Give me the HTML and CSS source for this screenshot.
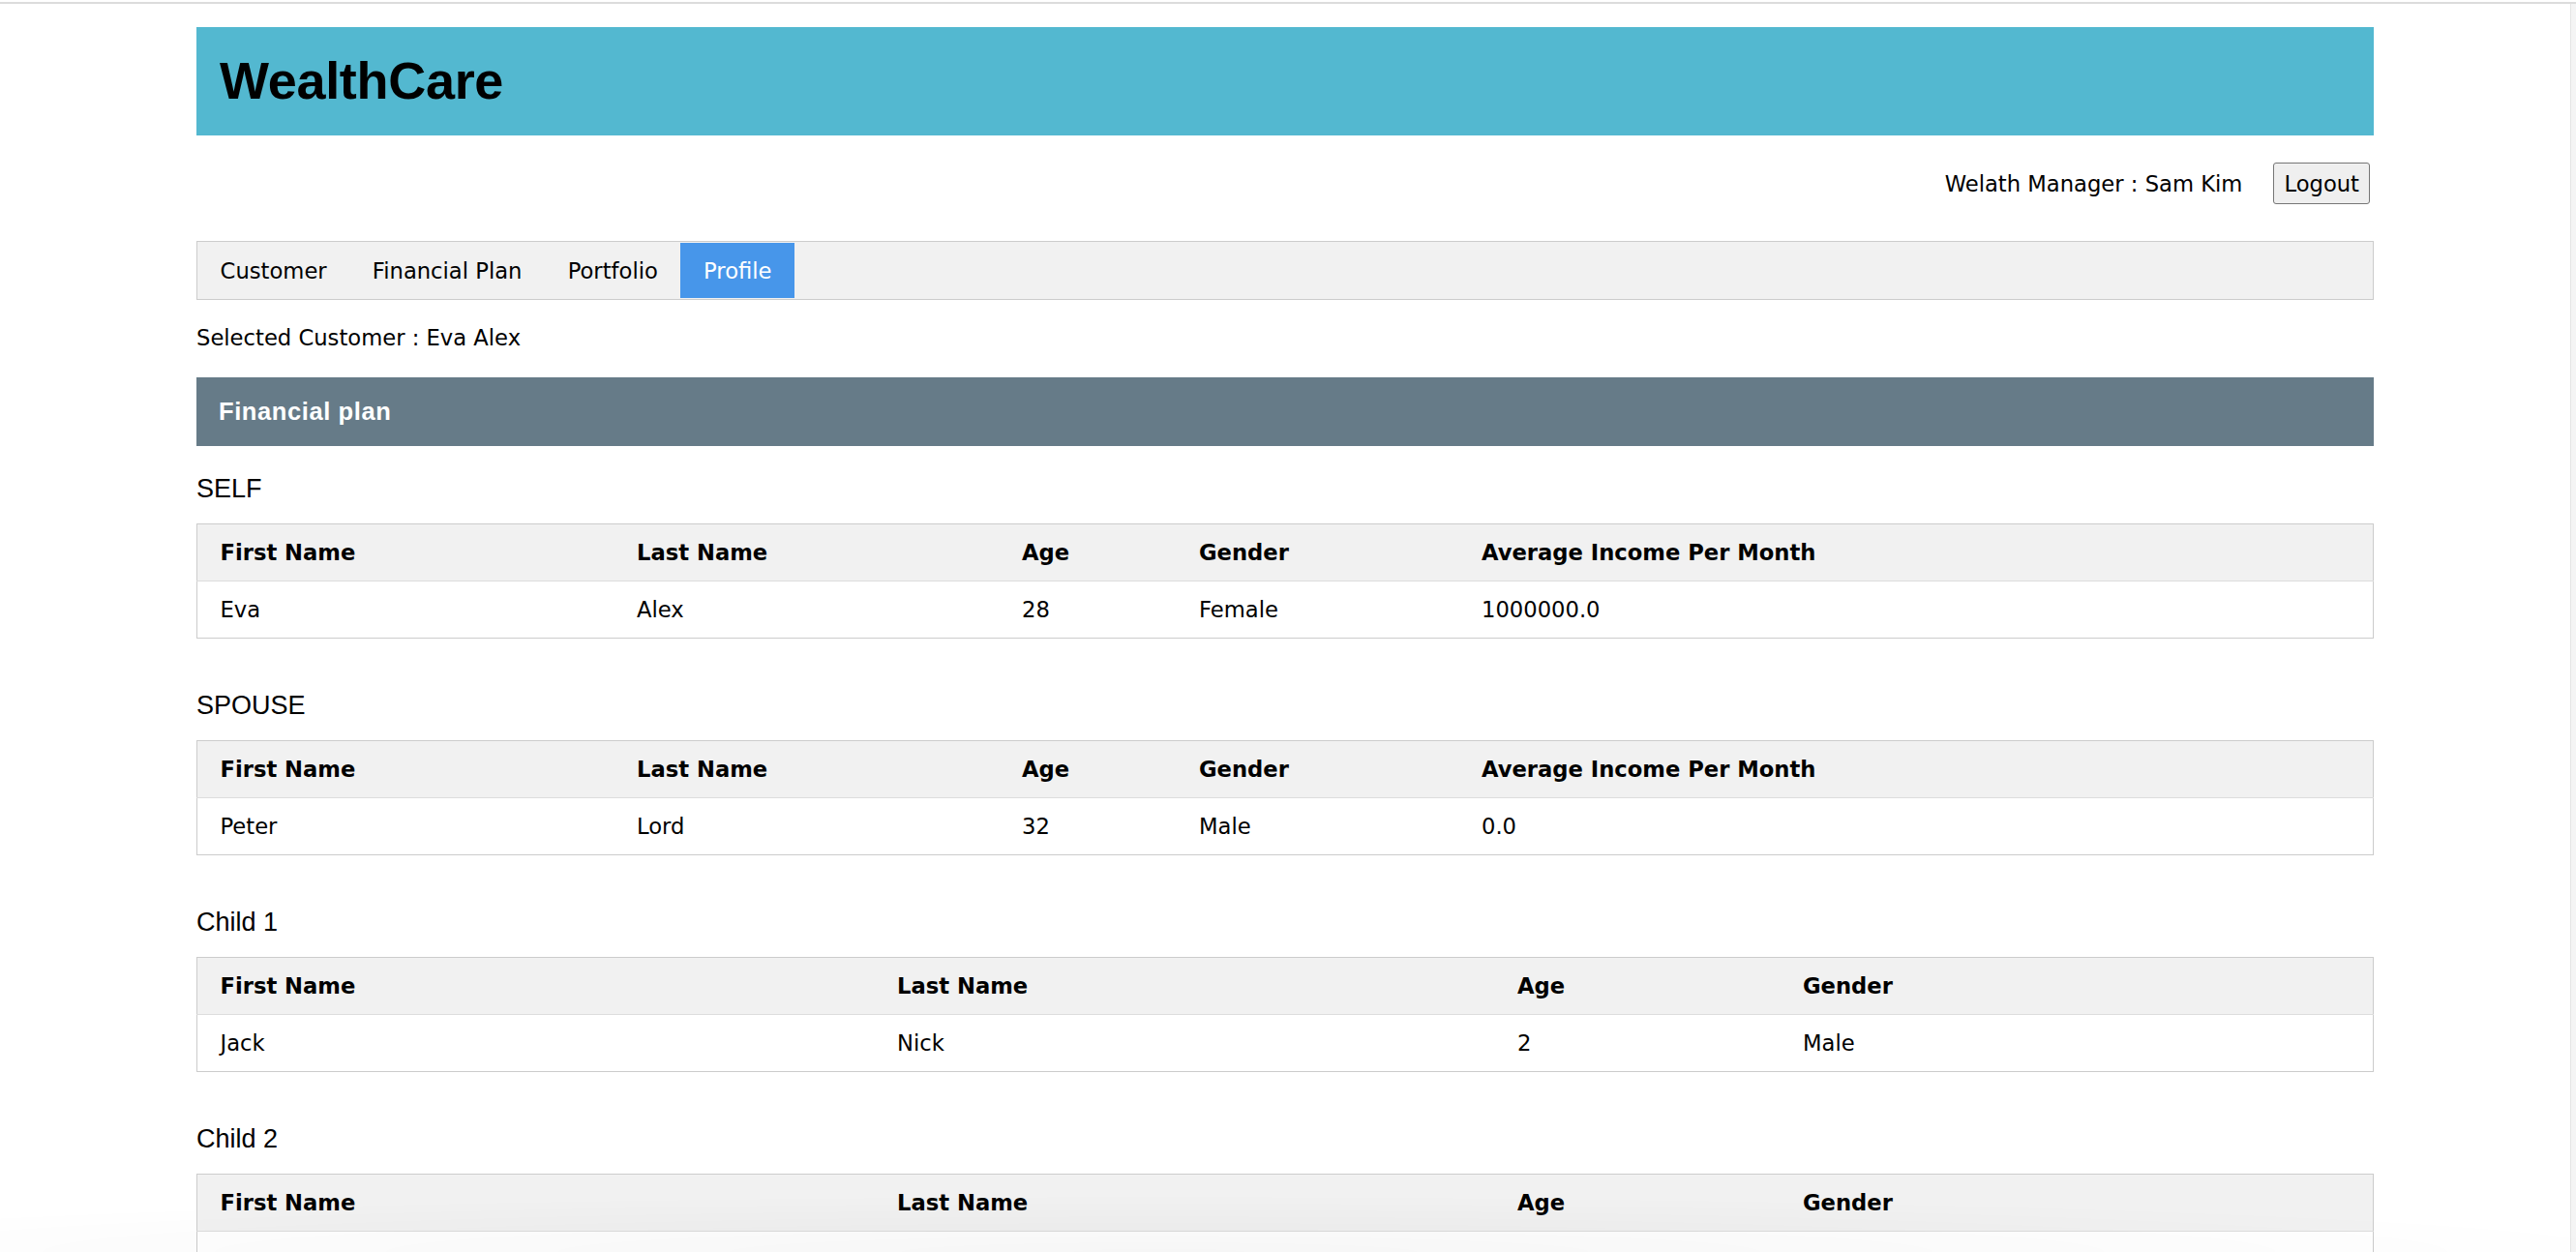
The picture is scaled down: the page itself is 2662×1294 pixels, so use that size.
FILE: index.html
```html
<!DOCTYPE html>
<html lang="en">
<head>
<meta charset="utf-8">
<title>WealthCare</title>
<link rel="stylesheet" href="styles.css">
</head>
<body>
<div class="topline"></div>
<div class="page">
  <main class="main">
    <div class="container">
      <header class="brand">
        <h1 class="brand-title">WealthCare</h1>
      </header>

      <div class="userbar">
        <span class="manager">Welath Manager : Sam Kim</span>
        <button class="logout" type="button">Logout</button>
      </div>

      <nav class="tabs">
        <a class="tab" href="#">Customer</a>
        <a class="tab" href="#">Financial Plan</a>
        <a class="tab" href="#">Portfolio</a>
        <a class="tab tab-active" href="#">Profile</a>
      </nav>

      <p class="selected">Selected Customer : Eva Alex</p>

      <div class="panel-title">Financial plan</div>

      <h2 class="section-title section-first">SELF</h2>
      <table class="grid">
        <colgroup>
          <col class="c5-1"><col class="c5-2"><col class="c5-3"><col class="c5-4"><col>
        </colgroup>
        <thead>
          <tr><th>First Name</th><th>Last Name</th><th>Age</th><th>Gender</th><th>Average Income Per Month</th></tr>
        </thead>
        <tbody>
          <tr><td>Eva</td><td>Alex</td><td>28</td><td>Female</td><td>1000000.0</td></tr>
        </tbody>
      </table>

      <h2 class="section-title">SPOUSE</h2>
      <table class="grid">
        <colgroup>
          <col class="c5-1"><col class="c5-2"><col class="c5-3"><col class="c5-4"><col>
        </colgroup>
        <thead>
          <tr><th>First Name</th><th>Last Name</th><th>Age</th><th>Gender</th><th>Average Income Per Month</th></tr>
        </thead>
        <tbody>
          <tr><td>Peter</td><td>Lord</td><td>32</td><td>Male</td><td>0.0</td></tr>
        </tbody>
      </table>

      <h2 class="section-title">Child 1</h2>
      <table class="grid">
        <colgroup>
          <col class="c4-1"><col class="c4-2"><col class="c4-3"><col>
        </colgroup>
        <thead>
          <tr><th>First Name</th><th>Last Name</th><th>Age</th><th>Gender</th></tr>
        </thead>
        <tbody>
          <tr><td>Jack</td><td>Nick</td><td>2</td><td>Male</td></tr>
        </tbody>
      </table>

      <h2 class="section-title">Child 2</h2>
      <table class="grid">
        <colgroup>
          <col class="c4-1"><col class="c4-2"><col class="c4-3"><col>
        </colgroup>
        <thead>
          <tr><th>First Name</th><th>Last Name</th><th>Age</th><th>Gender</th></tr>
        </thead>
        <tbody>
          <tr><td>&nbsp;</td><td>&nbsp;</td><td>&nbsp;</td><td>&nbsp;</td></tr>
        </tbody>
      </table>
    </div>
  </main>
  <div class="strip"></div>
</div>
<div class="fade"></div>
</body>
</html>
```

FILE: styles.css
```css
* {
  box-sizing: border-box;
}

html, body {
  margin: 0;
  padding: 0;
  background: #ffffff;
}

body {
  font-family: "DejaVu Sans", Verdana, sans-serif;
  font-size: 22.67px;
  line-height: 26px;
  color: #000000;
  padding-top: 2px;
}

.topline {
  height: 2px;
  background: #dcdcdc;
}

.page {
  display: flex;
  align-items: stretch;
  min-height: 1290px;
}

.main {
  flex: 1;
}

.strip {
  width: 6px;
  background: #f4f4f4;
  border-left: 1px solid #e4e4e4;
}

.container {
  width: 2250px;
  margin: 24px auto 0;
}

/* Brand header */
.brand {
  background: #53b8d0;
  height: 112px;
  padding: 24px 0 0 24px;
}

.brand-title {
  margin: 0;
  font-family: "Liberation Sans", Arial, sans-serif;
  font-weight: bold;
  font-size: 54px;
  line-height: 62px;
  letter-spacing: -0.3px;
}

/* User bar */
.userbar {
  display: flex;
  justify-content: flex-end;
  align-items: center;
  gap: 32px;
  height: 43px;
  margin-top: 28px;
  padding-right: 4px;
}

.logout {
  font-family: "DejaVu Sans", Verdana, sans-serif;
  font-size: 22.67px;
  line-height: 26px;
  height: 43px;
  padding: 0 10px;
  background: #efefef;
  color: #000000;
  border: 1px solid #767676;
  border-radius: 3px;
}

/* Tabs */
.tabs {
  display: flex;
  margin-top: 38px;
  background: #f1f1f1;
  border: 1px solid #cccccc;
  padding: 1px 0;
}

.tab {
  display: block;
  padding: 16px 23.6px 15px;
  color: #000000;
  text-decoration: none;
}

.tab-active {
  background: #4796ea;
  color: #ffffff;
}

.selected {
  margin: 26px 0 0;
}

/* Panel title */
.panel-title {
  margin-top: 28px;
  background: #667b88;
  color: #ffffff;
  font-family: "Liberation Sans", Arial, sans-serif;
  font-weight: bold;
  font-size: 25.5px;
  letter-spacing: 0.6px;
  line-height: 71px;
  height: 71px;
  padding-left: 23px;
}

/* Sections */
.section-title {
  margin: 53px 0 0;
  font-family: "Liberation Sans", Arial, sans-serif;
  font-weight: normal;
  font-size: 27px;
  line-height: 32px;
}

.section-first {
  margin-top: 28px;
}

.grid {
  width: 100%;
  margin-top: 20px;
  border-collapse: collapse;
  table-layout: fixed;
  border: 1px solid #cccccc;
}

.grid th,
.grid td {
  text-align: left;
  padding: 16px 23.5px;
  line-height: 26px;
  white-space: nowrap;
}

.grid th {
  font-weight: bold;
  background: #f1f1f1;
  border-bottom: 1px solid #dddddd;
}

.grid td {
  background: #ffffff;
}

.c5-1 { width: 431px; }
.c5-2 { width: 398px; }
.c5-3 { width: 183px; }
.c5-4 { width: 292px; }

.c4-1 { width: 700px; }
.c4-2 { width: 641px; }
.c4-3 { width: 295px; }

/* Bottom shade of the window */
.fade {
  position: fixed;
  left: 0;
  right: 0;
  bottom: 0;
  height: 60px;
  pointer-events: none;
  background: radial-gradient(ellipse 60% 100% at 45% 100%, rgba(0, 0, 0, 0.035), rgba(0, 0, 0, 0) 100%);
}
```
